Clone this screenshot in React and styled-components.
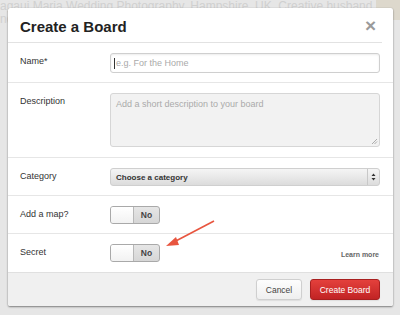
import React from "react";
import styled, { createGlobalStyle } from "styled-components";

const Global = createGlobalStyle`
  html, body { margin: 0; padding: 0; }
  body {
    width: 400px; height: 315px; overflow: hidden;
    background: #e4e4e4;
    font-family: "Liberation Sans", Arial, sans-serif;
  }
`;

const Page = styled.div`
  position: relative;
  width: 400px;
  height: 315px;
  overflow: hidden;
  background: #e6e6e6;
`;

const BgText = styled.div`
  padding-left: 0;
  font-size: 12px;
  line-height: 13px;
  color: #d0d0d0;
  white-space: nowrap;
  overflow: hidden;
  width: 380px;
`;

const BgThumb = styled.div`
  position: absolute;
  right: 0;
  top: 0;
  width: 24px;
  height: 20px;
  background: #ddd8cc;
`;

const Modal = styled.div`
  position: absolute;
  left: 8px;
  top: 8px;
  width: 385px;
  height: 298px;
  background: #fff;
  border-radius: 2px;
  box-shadow: 0 1px 2px rgba(0,0,0,0.45), 0 0 1px rgba(0,0,0,0.2);
  display: flex;
  flex-direction: column;
  overflow: hidden;
  color: #333;
`;

const Header = styled.div`
  height: 35px;
  box-sizing: border-box;
  margin-right: 11px;
  padding: 0 6px 0 12px;
  display: flex;
  align-items: center;
  justify-content: space-between;
  border-bottom: 1px solid #e2e2e2;
`;

const Title = styled.h1`
  margin: 0;
  padding-top: 2px;
  font-size: 15px;
  font-weight: bold;
  color: #222;
`;

const Close = styled.span`
  font-size: 19px;
  line-height: 19px;
  color: #9a9a9a;
  font-weight: bold;
  margin-top: 1px;
`;

const Row = styled.div`
  display: grid;
  grid-template-columns: 90px 1fr;
  align-items: start;
  padding: 10px 13px 10px 12px;
  border-bottom: ${p => (p.$last ? "none" : "1px solid #e6e6e6")};
  box-sizing: border-box;
  height: ${p => p.$h}px;
`;

const Label = styled.label`
  font-size: 9px;
  line-height: 16px;
  color: #333;
`;

const Input = styled.div`
  height: 20px;
  box-sizing: border-box;
  border: 1px solid #cfcfcf;
  border-radius: 3px;
  box-shadow: inset 0 1px 2px rgba(0,0,0,0.08);
  background: #fff;
  display: flex;
  align-items: center;
  padding-left: 3px;
  font-size: 9px;
  color: #aaa;
`;

const Caret = styled.span`
  width: 1px;
  height: 11px;
  background: #333;
  margin-right: 1px;
`;

const TextArea = styled.div`
  position: relative;
  height: 54px;
  box-sizing: border-box;
  border: 1px solid #d6d6d6;
  border-radius: 3px;
  background: #f2f2f2;
  padding: 5px 5px;
  font-size: 9px;
  color: #aaa;
`;

const Grip = styled.svg`
  position: absolute;
  right: 1px;
  bottom: 1px;
`;

const Select = styled.div`
  height: 18px;
  box-sizing: border-box;
  border: 1px solid #cfcfcf;
  border-radius: 3px;
  background: linear-gradient(#f5f5f5, #dcdcdc);
  display: flex;
  align-items: center;
  font-size: 8px;
  font-weight: bold;
  color: #333;
`;

const SelectText = styled.span`
  flex: 1;
  padding-left: 5px;
`;

const SelectArrows = styled.span`
  width: 11px;
  height: 100%;
  border-left: 1px solid #c8c8c8;
  display: flex;
  align-items: center;
  justify-content: center;
`;

const Toggle = styled.div`
  width: 50px;
  height: 18px;
  box-sizing: border-box;
  border: 1px solid #a9a9a9;
  border-radius: 3px;
  display: flex;
  overflow: hidden;
  background: linear-gradient(#e6e6e6, #d6d6d6);
`;

const Knob = styled.span`
  width: 22px;
  background: linear-gradient(#fff, #f2f2f2);
  border-right: 1px solid #b8b8b8;
`;

const ToggleText = styled.span`
  flex: 1;
  text-align: center;
  font-size: 8.5px;
  font-weight: bold;
  line-height: 16px;
  color: #444;
`;

const ControlLine = styled.div`
  display: flex;
  align-items: center;
  justify-content: space-between;
`;

const LearnMore = styled.a`
  font-size: 7px;
  font-weight: bold;
  color: #666;
  margin-right: 1px;
  margin-top: 2px;
`;

const Footer = styled.div`
  flex: 1;
  background: #f0f0f0;
  border-top: 1px solid #e0e0e0;
  display: flex;
  justify-content: flex-end;
  align-items: flex-start;
  gap: 8px;
  padding: 6px 13px 0 0;
`;

const Button = styled.button`
  height: 21px;
  width: ${p => (p.$primary ? "70px" : "46px")};
  box-sizing: border-box;
  padding: 0;
  border-radius: 3px;
  font-family: "Liberation Sans", Arial, sans-serif;
  font-size: 8.5px;
  color: ${p => (p.$primary ? "#fff" : "#444")};
  border: 1px solid ${p => (p.$primary ? "#a82020" : "#cfcfcf")};
  background: ${p =>
    p.$primary
      ? "linear-gradient(#e4403c, #c12424)"
      : "linear-gradient(#fdfdfd, #efefef)"};
  box-shadow: 0 1px 1px rgba(0,0,0,0.08);
`;

const ArrowSvg = styled.svg`
  position: absolute;
  left: 0;
  top: 0;
  pointer-events: none;
`;

export default function App() {
  return (
    <>
      <Global />
      <Page>
        <BgText>agaui Maria Wedding Photography. Hampshire, UK. Creative husband</BgText>
        <BgText>nd</BgText>
        <BgThumb />
        <Modal>
          <Header>
            <Title>Create a Board</Title>
            <Close>×</Close>
          </Header>
          <Row $h={40}>
            <Label>Name*</Label>
            <Input><Caret />e.g. For the Home</Input>
          </Row>
          <Row $h={75}>
            <Label>Description</Label>
            <TextArea>
              Add a short description to your board
              <Grip width="7" height="7" viewBox="0 0 7 7">
                <path d="M6 1 L1 6 M6 3.5 L3.5 6" stroke="#999" strokeWidth="0.8" />
              </Grip>
            </TextArea>
          </Row>
          <Row $h={38}>
            <Label>Category</Label>
            <Select>
              <SelectText>Choose a category</SelectText>
              <SelectArrows>
                <svg width="5" height="8" viewBox="0 0 5 8">
                  <path d="M2.5 0.5 L4.5 3 L0.5 3 Z M2.5 7.5 L4.5 5 L0.5 5 Z" fill="#333" />
                </svg>
              </SelectArrows>
            </Select>
          </Row>
          <Row $h={38}>
            <Label>Add a map?</Label>
            <ControlLine>
              <Toggle><Knob /><ToggleText>No</ToggleText></Toggle>
            </ControlLine>
          </Row>
          <Row $h={38} $last>
            <Label>Secret</Label>
            <ControlLine>
              <Toggle><Knob /><ToggleText>No</ToggleText></Toggle>
              <LearnMore>Learn more</LearnMore>
            </ControlLine>
          </Row>
          <Footer>
            <Button>Cancel</Button>
            <Button $primary>Create Board</Button>
          </Footer>
        </Modal>
        <ArrowSvg width="400" height="315" viewBox="0 0 400 315">
          <path d="M214 221 L172 243" stroke="#e8553f" strokeWidth="1.6" fill="none" />
          <path d="M166 246 L176 237 L179 245 Z" fill="#e8553f" />
        </ArrowSvg>
      </Page>
    </>
  );
}
